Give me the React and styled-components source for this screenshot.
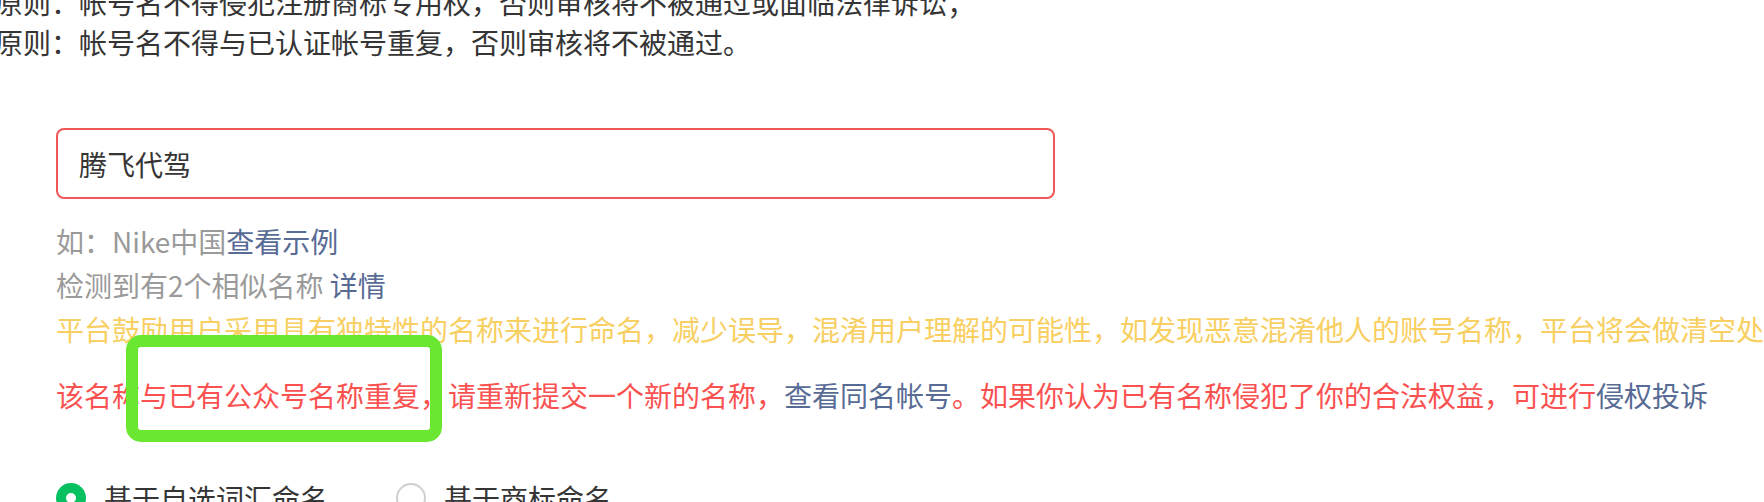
import React from "react";
import styled, { createGlobalStyle } from "styled-components";

const GlobalStyle = createGlobalStyle`
  html, body {
    margin: 0;
    padding: 0;
    background: #ffffff;
    overflow: hidden;
  }
  body {
    font-family: "Noto Sans CJK SC", "Noto Sans", sans-serif;
    color: #353535;
  }
`;

const Page = styled.div`
  width: 1764px;
  height: 502px;
  overflow: hidden;
  position: relative;
`;

const Rules = styled.div`
  margin: -18px 0 0 -5px;
  font-size: 28px;
  line-height: 40px;
  color: #353535;
  white-space: nowrap;
`;

const Form = styled.div`
  padding-left: 56px;
  margin-top: 66px;
`;

const NameInput = styled.div`
  box-sizing: border-box;
  width: 999px;
  height: 71px;
  border: 2px solid #f25757;
  border-radius: 8px;
  padding: 0 21px;
  display: flex;
  align-items: center;
  font-size: 28px;
  color: #353535;
`;

const Hints = styled.div`
  margin-top: 20px;
  font-size: 28px;
  line-height: 44px;
  white-space: nowrap;
`;

const Line = styled.p`
  margin: 0;
  color: ${(p) => p.$tone || "#9a9a9a"};
`;

const Link = styled.span`
  color: #576b95;
`;

const ErrorLine = styled.p`
  position: relative;
  margin: 22px 0 0;
  font-size: 28px;
  line-height: 44px;
  color: #fa5151;
  white-space: nowrap;
`;

const Highlight = styled.span`
  position: absolute;
  left: 70px;
  top: -38px;
  width: 316px;
  height: 107px;
  box-sizing: border-box;
  border: 12px solid #6ae831;
  border-radius: 15px;
  pointer-events: none;
`;

const RadioRow = styled.div`
  margin-top: 59px;
  display: flex;
  align-items: center;
  gap: 68px;
  font-size: 28px;
  line-height: 44px;
  color: #353535;
`;

const RadioOption = styled.label`
  display: flex;
  align-items: center;
  gap: 18px;
`;

const RadioDot = styled.span`
  box-sizing: border-box;
  width: 30px;
  height: 30px;
  border-radius: 50%;
  display: flex;
  align-items: center;
  justify-content: center;
  border: ${(p) => (p.$checked ? "none" : "2px solid #cfcfcf")};
  background: ${(p) => (p.$checked ? "#07c160" : "#ffffff")};

  &::after {
    content: "";
    display: ${(p) => (p.$checked ? "block" : "none")};
    width: 10px;
    height: 10px;
    border-radius: 50%;
    background: #ffffff;
  }
`;

export default function App() {
  return (
    <Page>
      <GlobalStyle />
      <Rules>
        <div>原则：帐号名不得侵犯注册商标专用权，否则审核将不被通过或面临法律诉讼；</div>
        <div>原则：帐号名不得与已认证帐号重复，否则审核将不被通过。</div>
      </Rules>
      <Form>
        <NameInput>腾飞代驾</NameInput>
        <Hints>
          <Line>
            如：Nike中国<Link>查看示例</Link>
          </Line>
          <Line>
            检测到有2个相似名称 <Link>详情</Link>
          </Line>
          <Line $tone="#f8cf62">
            平台鼓励用户采用具有独特性的名称来进行命名，减少误导，混淆用户理解的可能性，如发现恶意混淆他人的账号名称，平台将会做清空处理。
          </Line>
        </Hints>
        <ErrorLine>
          该名称与已有公众号名称重复，请重新提交一个新的名称，<Link>查看同名帐号</Link>。如果你认为已有名称侵犯了你的合法权益，可进行<Link>侵权投诉</Link>
          <Highlight />
        </ErrorLine>
        <RadioRow>
          <RadioOption>
            <RadioDot $checked />
            基于自选词汇命名
          </RadioOption>
          <RadioOption>
            <RadioDot />
            基于商标命名
          </RadioOption>
        </RadioRow>
      </Form>
    </Page>
  );
}
